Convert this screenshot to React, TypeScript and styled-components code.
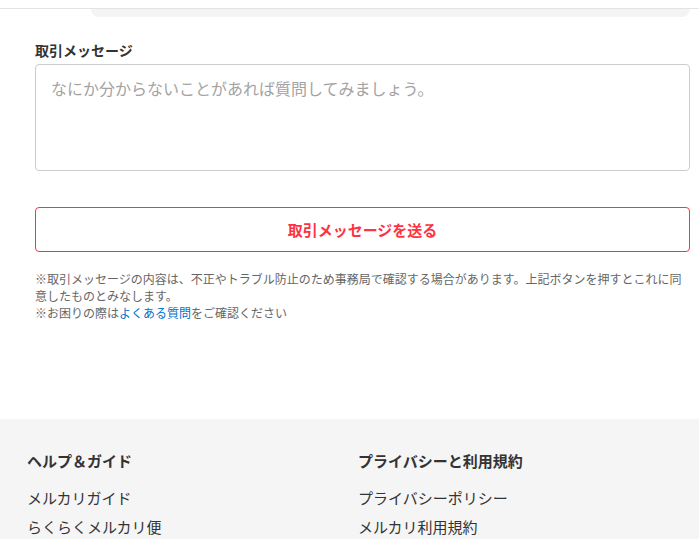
import React from "react";
import styled, { createGlobalStyle } from "styled-components";

const Global = createGlobalStyle`
  html, body { margin: 0; padding: 0; background: #fff; }
  body { font-family: "Noto Sans CJK JP", "Noto Sans", sans-serif; color: #333; }
  * { box-sizing: border-box; }
`;

const Page = styled.div`
  width: 699px;
  min-height: 539px;
  display: flex;
  flex-direction: column;
`;

const TopBar = styled.div`
  height: 9px;
  border-bottom: 1px solid #e3e3e3;
`;

const TopCardEdge = styled.div`
  margin-left: 91px;
  width: 599px;
  height: 8px;
  background: #f4f4f4;
  border-radius: 0 0 8px 8px;
`;

const Main = styled.section`
  padding: 23px 9px 0 35px;
  display: flex;
  flex-direction: column;
`;

const Label = styled.label`
  font-size: 14px;
  line-height: 20px;
  font-weight: 700;
  color: #333;
`;

const MessageBox = styled.textarea`
  margin-top: 4px;
  width: 100%;
  height: 107px;
  border: 1px solid #ccc;
  border-radius: 4px;
  padding: 11px 15px;
  font-family: inherit;
  font-size: 16px;
  line-height: 24px;
  resize: none;
  outline: none;
  color: #333;
  &::placeholder { color: #a3a3a3; }
`;

const SendButton = styled.button`
  margin-top: 36px;
  width: 100%;
  height: 45px;
  border: 1px solid #ff333f;
  border-radius: 4px;
  background: #fff;
  color: #ff333f;
  font-family: inherit;
  font-size: 15px;
  font-weight: 700;
  cursor: pointer;
`;

const Notes = styled.p`
  margin: 18px 0 0;
  font-size: 12px;
  line-height: 17px;
  color: #666;
`;

const Link = styled.a`
  color: #0073cc;
  text-decoration: none;
`;

const Footer = styled.footer`
  margin-top: 98px;
  flex: 1;
  background: #f5f5f5;
  padding: 31px 0 0 27px;
  display: grid;
  grid-template-columns: 331px 1fr;
`;

const FooterCol = styled.div`
  display: flex;
  flex-direction: column;
`;

const FooterHeading = styled.h3`
  margin: 0 0 11px;
  font-size: 15px;
  line-height: 22px;
  font-weight: 700;
  color: #333;
`;

const FooterLink = styled.a`
  font-size: 15px;
  line-height: 29px;
  color: #333;
  text-decoration: none;
`;

export default function App() {
  return (
    <>
      <Global />
      <Page>
        <TopBar />
        <TopCardEdge />
        <Main>
          <Label htmlFor="msg">取引メッセージ</Label>
          <MessageBox id="msg" placeholder="なにか分からないことがあれば質問してみましょう。" />
          <SendButton>取引メッセージを送る</SendButton>
          <Notes>
            ※取引メッセージの内容は、不正やトラブル防止のため事務局で確認する場合があります。上記ボタンを押すとこれに同意したものとみなします。
            <br />
            ※お困りの際は<Link href="#">よくある質問</Link>をご確認ください
          </Notes>
        </Main>
        <Footer>
          <FooterCol>
            <FooterHeading>ヘルプ＆ガイド</FooterHeading>
            <FooterLink href="#">メルカリガイド</FooterLink>
            <FooterLink href="#">らくらくメルカリ便</FooterLink>
          </FooterCol>
          <FooterCol>
            <FooterHeading>プライバシーと利用規約</FooterHeading>
            <FooterLink href="#">プライバシーポリシー</FooterLink>
            <FooterLink href="#">メルカリ利用規約</FooterLink>
          </FooterCol>
        </Footer>
      </Page>
    </>
  );
}
